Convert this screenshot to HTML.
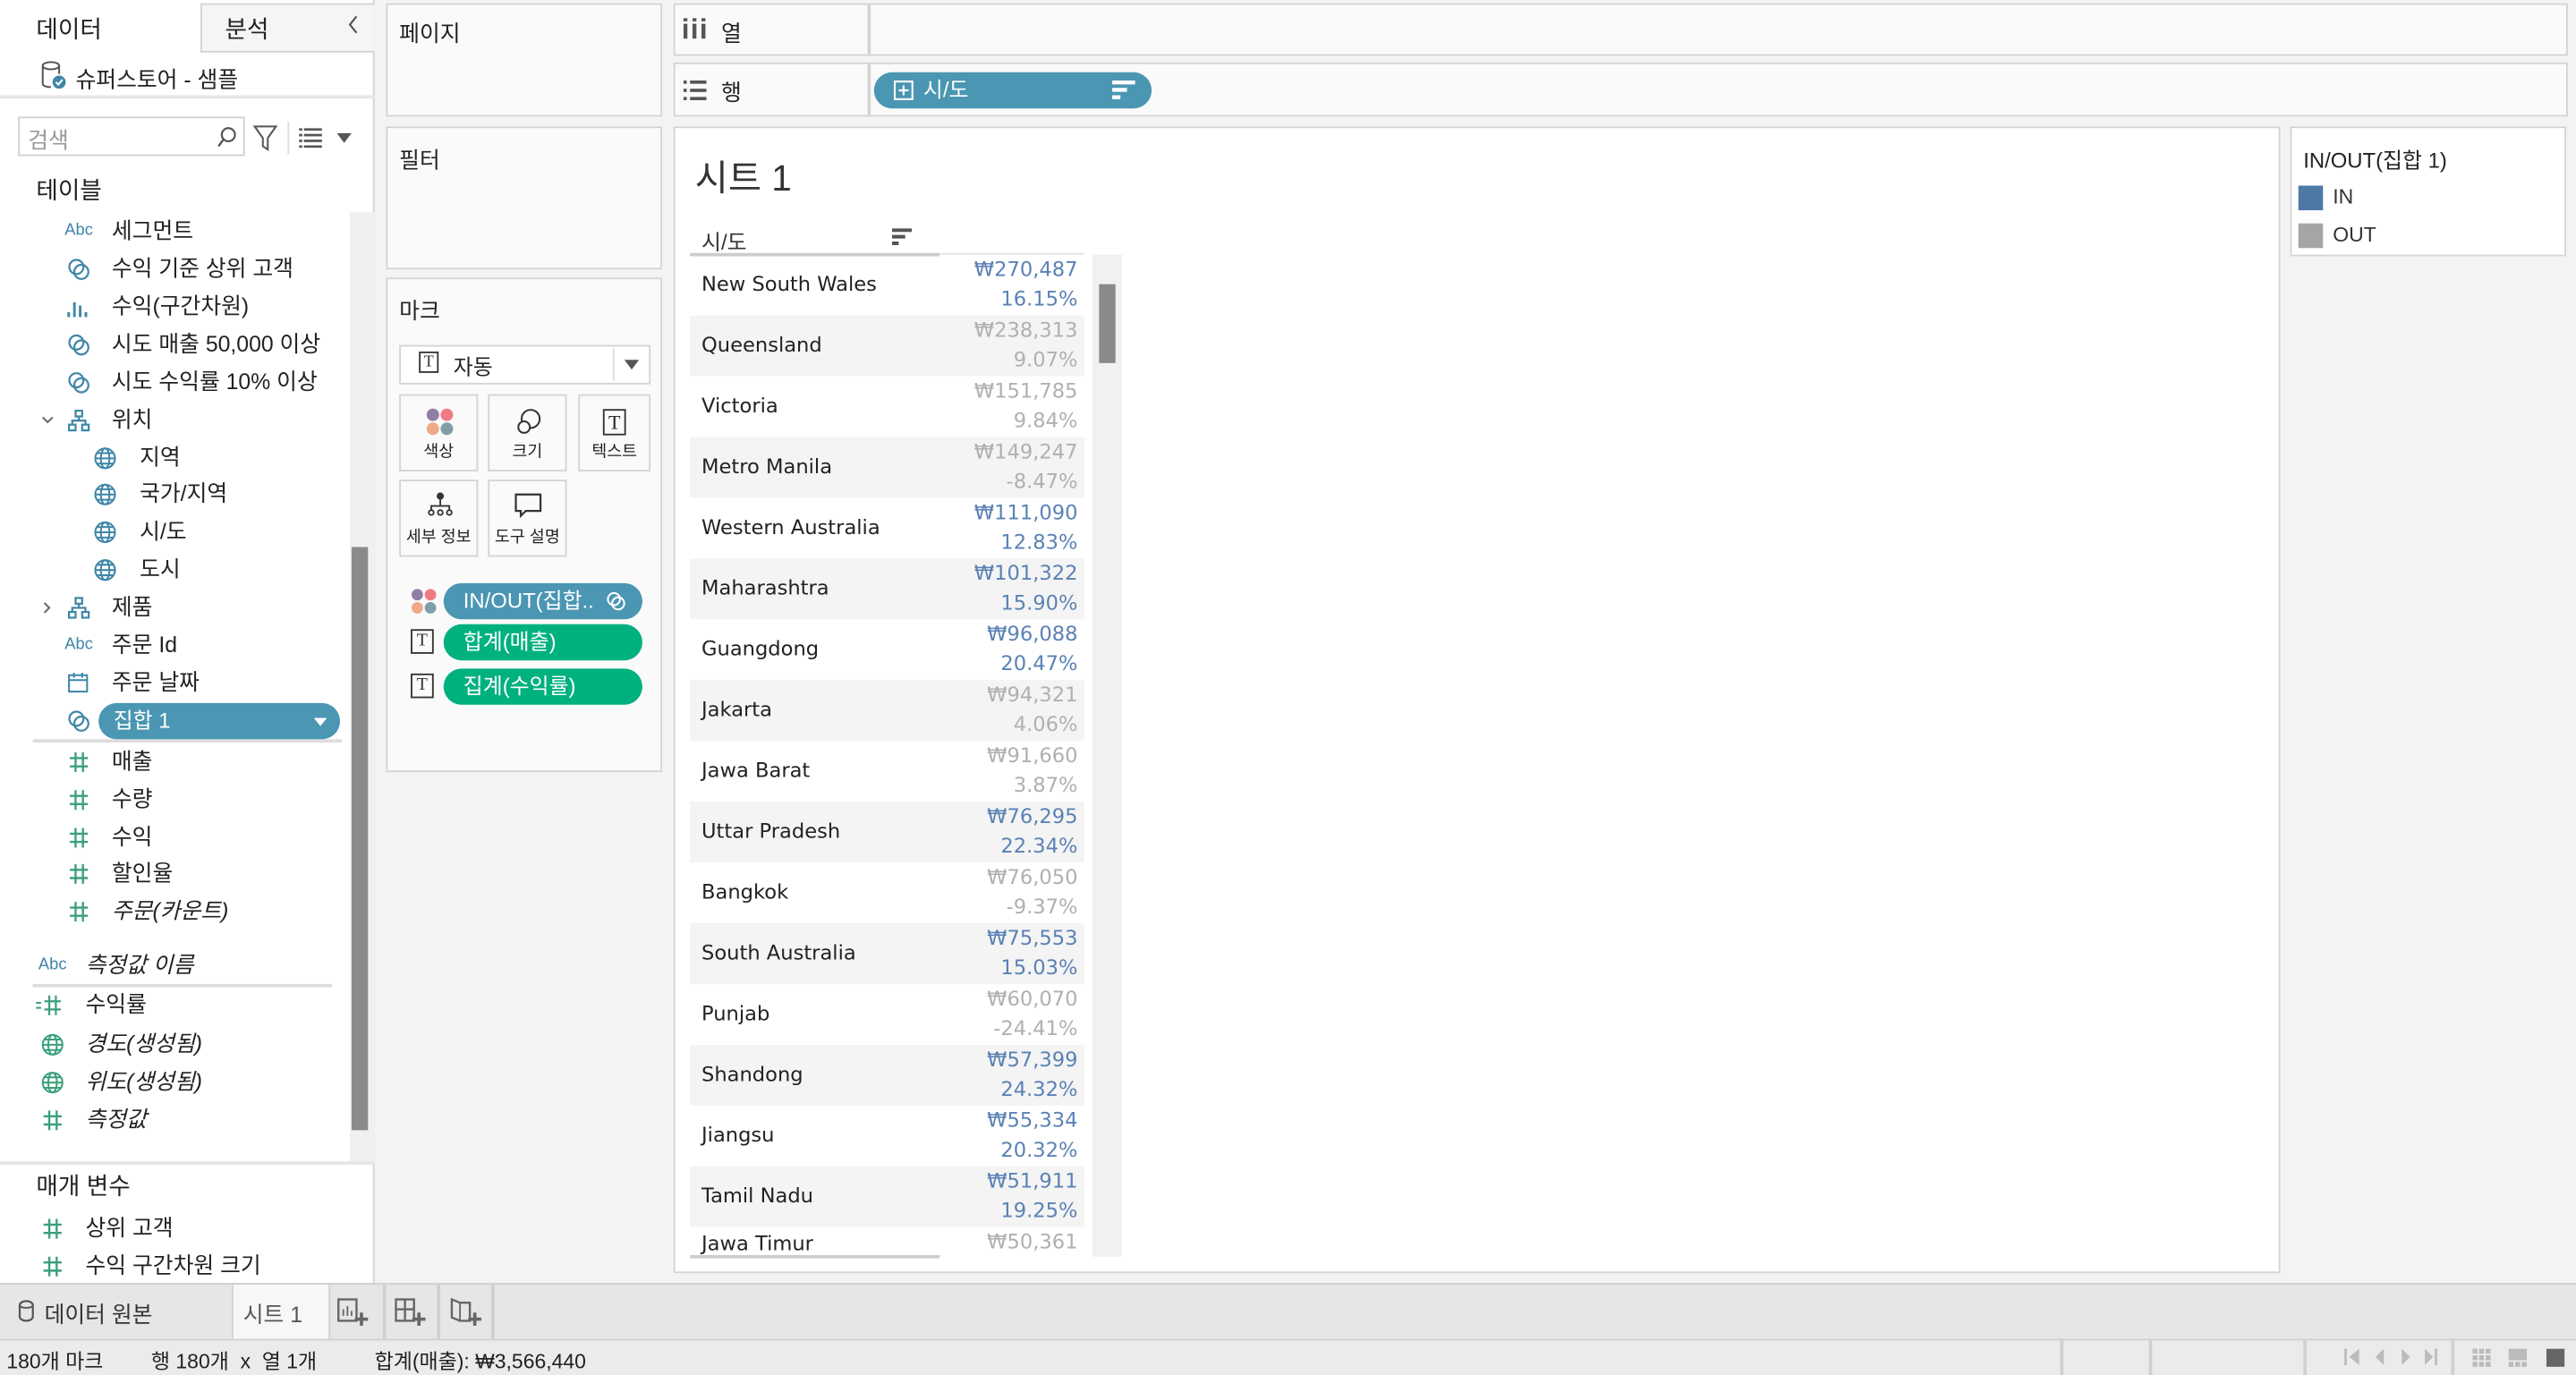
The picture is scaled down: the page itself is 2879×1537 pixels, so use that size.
<!DOCTYPE html>
<html><head><meta charset="utf-8">
<style>
*{box-sizing:border-box;margin:0;padding:0}
html,body{width:2879px;height:1537px;overflow:hidden;background:#f3f3f3}
#w{position:absolute;left:0;top:0;width:1568px;height:837px;transform:scale(1.8361,1.8363);transform-origin:0 0;font-family:"Liberation Sans","Noto Sans CJK KR",sans-serif;color:#333;font-size:13px;background:#f3f3f3}
.a{position:absolute;white-space:nowrap}
.card{position:absolute;background:#fafafa;border:1.5px solid #d4d4d4}
.it{position:absolute;left:0;height:23px;line-height:23px;font-size:13.5px;color:#222}
.it .ic{position:absolute;width:20px;text-align:center;color:#3f86a8;font-size:10px}
.it svg{position:absolute;top:5px}
.g{color:#3aa07a!important}
.row{position:absolute;left:420px;width:240px;height:37px}
.row.s{background:#f4f4f4}
.row .n{position:absolute;left:7px;top:11px;color:#222;font-family:"DejaVu Sans",sans-serif;font-size:12.3px}
.row .v{position:absolute;right:4px;top:1px;text-align:right;font-family:"DejaVu Sans",sans-serif;font-size:12.3px;line-height:17.5px}
.b{color:#5b82b4}.q{color:#b0b0b0}
.mb{position:absolute;width:48px;height:47px;border:1.5px solid #d4d4d4;background:#fafafa;text-align:center;font-size:10px;color:#222}
.mb span{position:absolute;left:0;right:0;bottom:5px}
.pill{position:absolute;height:22px;border-radius:11px;color:#fff;font-size:13px;line-height:22px}
</style></head><body><div id="w">
<svg width="0" height="0" style="position:absolute"><defs>
<symbol id="set" viewBox="0 0 14 14"><circle cx="5.5" cy="5.5" r="4.3" fill="none" stroke="#3f86a8" stroke-width="1.2"/><circle cx="8.5" cy="8.5" r="4.3" fill="none" stroke="#3f86a8" stroke-width="1.2"/></symbol>
<symbol id="gl" viewBox="0 0 14 14"><g fill="none" stroke="#3f86a8" stroke-width="1.1"><circle cx="7" cy="7" r="6"/><ellipse cx="7" cy="7" rx="2.6" ry="6"/><path d="M1 7h12M2 3.8h10M2 10.2h10"/></g></symbol>
<symbol id="glg" viewBox="0 0 14 14"><g fill="none" stroke="#3aa07a" stroke-width="1.1"><circle cx="7" cy="7" r="6"/><ellipse cx="7" cy="7" rx="2.6" ry="6"/><path d="M1 7h12M2 3.8h10M2 10.2h10"/></g></symbol>
<symbol id="hi" viewBox="0 0 14 14"><g fill="none" stroke="#3f86a8" stroke-width="1.2"><rect x="5" y="1" width="4" height="3.5"/><rect x="1" y="9.5" width="4" height="3.5"/><rect x="9" y="9.5" width="4" height="3.5"/><path d="M7 4.5v2.5M3 9.5V7h8v2.5"/></g></symbol>
<symbol id="hs" viewBox="0 0 14 14"><g stroke="#3aa07a" stroke-width="1.3"><path d="M5 1v12M9.5 1v12M1.5 4.5h11M1.5 9.5h11"/></g></symbol>
</defs></svg>

<!-- left pane -->
<div class="a" style="left:0;top:0;width:228px;height:781px;background:#fff;border-right:1.5px solid #d4d4d4"></div>
<div class="a" style="left:122px;top:2px;width:106px;height:30px;background:#f5f5f5;border-left:1.5px solid #d4d4d4;border-bottom:1.5px solid #d4d4d4;border-top:1.5px solid #d4d4d4"></div>
<div class="a" style="left:22px;top:7px;font-size:14.5px;color:#222">데이터</div>
<div class="a" style="left:137px;top:7px;font-size:14.5px;color:#222">분석</div>
<svg class="a" style="left:211px;top:9px" width="8" height="12"><path d="M6 1L2 6l4 5" fill="none" stroke="#555" stroke-width="1.2"/></svg>
<svg class="a" style="left:24px;top:36px" width="18" height="19" viewBox="0 0 18 19"><ellipse cx="7" cy="4" rx="5" ry="2.2" fill="none" stroke="#555" stroke-width="1.1"/><path d="M2 4v11c0 1.2 2 2 5 2M12 4v5" fill="none" stroke="#555" stroke-width="1.1"/><circle cx="12" cy="14" r="4" fill="#3f86a8"/><path d="M10 14l1.5 1.5 2.5-3" stroke="#fff" stroke-width="1.1" fill="none"/></svg>
<div class="a" style="left:46px;top:37px;font-size:13.5px;color:#222">슈퍼스토어 - 샘플</div>
<div class="a" style="left:0;top:58px;width:228px;height:1.5px;background:#e6e6e6"></div>
<div class="a" style="left:11px;top:71px;width:138px;height:24px;border:1.5px solid #d0d0d0;background:#fff"></div>
<div class="a" style="left:17px;top:74px;font-size:13.5px;color:#999">검색</div>
<svg class="a" style="left:131px;top:76px" width="14" height="14"><circle cx="8" cy="6" r="4" fill="none" stroke="#555" stroke-width="1.2"/><path d="M5 9l-3 4" stroke="#555" stroke-width="1.3"/></svg>
<svg class="a" style="left:154px;top:76px" width="16" height="16"><path d="M1 1h13l-5 7v7l-3-2V8z" fill="none" stroke="#555" stroke-width="1.1"/></svg>
<div class="a" style="left:175px;top:74px;width:1px;height:20px;background:#ddd"></div>
<svg class="a" style="left:182px;top:78px" width="14" height="12"><g fill="#555"><rect x="0" y="0" width="2" height="1.5"/><rect x="3" y="0" width="11" height="1.5"/><rect x="0" y="3.5" width="2" height="1.5"/><rect x="3" y="3.5" width="11" height="1.5"/><rect x="0" y="7" width="2" height="1.5"/><rect x="3" y="7" width="11" height="1.5"/><rect x="0" y="10.5" width="2" height="1.5"/><rect x="3" y="10.5" width="11" height="1.5"/></g></svg>
<svg class="a" style="left:205px;top:81px" width="9" height="6"><path d="M0 0h9L4.5 6z" fill="#555"/></svg>
<div class="a" style="left:22px;top:105px;font-size:14.5px;color:#222">테이블</div>
<div class="a" style="left:213px;top:129px;width:15px;height:578px;background:#f0f0f0"></div>
<div class="a" style="left:214px;top:333px;width:10px;height:355px;background:#8a8a8a"></div>

<div class="it" style="top:129px"><span class="ic" style="left:38px">Abc</span><span class="a" style="left:68px">세그먼트</span></div>
<div class="it" style="top:152px"><svg style="left:41px" width="14" height="14"><use href="#set"/></svg><span class="a" style="left:68px">수익 기준 상위 고객</span></div>
<div class="it" style="top:175px"><svg style="left:40px" width="14" height="14"><g fill="#3f86a8"><rect x="1" y="10" width="1.6" height="3"/><rect x="4.5" y="4" width="1.6" height="9"/><rect x="8" y="6" width="1.6" height="7"/><rect x="11.5" y="10" width="1.6" height="3"/></g></svg><span class="a" style="left:68px">수익(구간차원)</span></div>
<div class="it" style="top:198px"><svg style="left:41px" width="14" height="14"><use href="#set"/></svg><span class="a" style="left:68px">시도 매출 50,000 이상</span></div>
<div class="it" style="top:221px"><svg style="left:41px" width="14" height="14"><use href="#set"/></svg><span class="a" style="left:68px">시도 수익률 10% 이상</span></div>
<div class="it" style="top:244px"><svg style="left:25px;top:9px" width="8" height="6"><path d="M1 1l3 3 3-3" fill="none" stroke="#666" stroke-width="1.1"/></svg><svg style="left:41px" width="14" height="14"><use href="#hi"/></svg><span class="a" style="left:68px">위치</span></div>
<div class="it" style="top:267px"><svg style="left:57px" width="14" height="14"><use href="#gl"/></svg><span class="a" style="left:85px">지역</span></div>
<div class="it" style="top:289px"><svg style="left:57px" width="14" height="14"><use href="#gl"/></svg><span class="a" style="left:85px">국가/지역</span></div>
<div class="it" style="top:312px"><svg style="left:57px" width="14" height="14"><use href="#gl"/></svg><span class="a" style="left:85px">시/도</span></div>
<div class="it" style="top:335px"><svg style="left:57px" width="14" height="14"><use href="#gl"/></svg><span class="a" style="left:85px">도시</span></div>
<div class="it" style="top:358px"><svg style="left:26px;top:8px" width="6" height="8"><path d="M1 1l3 3-3 3" fill="none" stroke="#666" stroke-width="1.1"/></svg><svg style="left:41px" width="14" height="14"><use href="#hi"/></svg><span class="a" style="left:68px">제품</span></div>
<div class="it" style="top:381px"><span class="ic" style="left:38px">Abc</span><span class="a" style="left:68px">주문 Id</span></div>
<div class="it" style="top:404px"><svg style="left:41px" width="13" height="13"><g fill="none" stroke="#3f86a8" stroke-width="1.1"><rect x="1" y="2" width="11" height="10"/><path d="M1 5h11M4 0.5v3M9 0.5v3"/></g></svg><span class="a" style="left:68px">주문 날짜</span></div>
<svg class="a" style="left:41px;top:432px" width="14" height="14"><use href="#set"/></svg>
<div class="pill" style="left:60px;top:428px;width:147px;background:#4a96b3;padding-left:9px">집합 1<svg style="position:absolute;right:8px;top:9px" width="8" height="5"><path d="M0 0h8L4 5z" fill="#fff"/></svg></div>
<div class="a" style="left:20px;top:450px;width:188px;height:1.5px;background:#ddd"></div>
<div class="it" style="top:452px"><svg style="left:41px" width="14" height="14"><use href="#hs"/></svg><span class="a" style="left:68px">매출</span></div>
<div class="it" style="top:475px"><svg style="left:41px" width="14" height="14"><use href="#hs"/></svg><span class="a" style="left:68px">수량</span></div>
<div class="it" style="top:498px"><svg style="left:41px" width="14" height="14"><use href="#hs"/></svg><span class="a" style="left:68px">수익</span></div>
<div class="it" style="top:520px"><svg style="left:41px" width="14" height="14"><use href="#hs"/></svg><span class="a" style="left:68px">할인율</span></div>
<div class="it" style="top:543px"><svg style="left:41px" width="14" height="14"><use href="#hs"/></svg><span class="a" style="left:68px;font-style:italic">주문(카운트)</span></div>
<div class="it" style="top:576px"><span class="ic" style="left:22px">Abc</span><span class="a" style="left:52px;font-style:italic">측정값 이름</span></div>
<div class="a" style="left:20px;top:599px;width:182px;height:1.5px;background:#ddd"></div>
<div class="it" style="top:600px"><svg style="left:21px" width="18" height="14"><g stroke="#3aa07a" stroke-width="1.2"><path d="M1 5.5h3M1 8.5h3M9 1v12M13 1v12M6 4.5h10M6 9.5h10"/></g></svg><span class="a" style="left:52px">수익률</span></div>
<div class="it" style="top:624px"><svg style="left:25px" width="14" height="14"><use href="#glg"/></svg><span class="a" style="left:52px;font-style:italic">경도(생성됨)</span></div>
<div class="it" style="top:647px"><svg style="left:25px" width="14" height="14"><use href="#glg"/></svg><span class="a" style="left:52px;font-style:italic">위도(생성됨)</span></div>
<div class="it" style="top:670px"><svg style="left:25px" width="14" height="14"><use href="#hs"/></svg><span class="a" style="left:52px;font-style:italic">측정값</span></div>
<div class="a" style="left:0;top:707px;width:228px;height:2px;background:#e4e4e4"></div>
<div class="a" style="left:22px;top:711px;font-size:14.5px;color:#222">매개 변수</div>
<div class="it" style="top:736px"><svg style="left:25px" width="14" height="14"><use href="#hs"/></svg><span class="a" style="left:52px">상위 고객</span></div>
<div class="it" style="top:759px"><svg style="left:25px" width="14" height="14"><use href="#hs"/></svg><span class="a" style="left:52px">수익 구간차원 크기</span></div>

<!-- cards -->
<div class="card" style="left:235px;top:2px;width:168px;height:69px"></div>
<div class="a" style="left:243px;top:9px;font-size:13.5px;color:#222">페이지</div>
<div class="card" style="left:235px;top:77px;width:168px;height:87px"></div>
<div class="a" style="left:243px;top:86px;font-size:13.5px;color:#222">필터</div>
<div class="card" style="left:235px;top:169px;width:168px;height:301px"></div>
<div class="a" style="left:243px;top:178px;font-size:13.5px;color:#222">마크</div>
<div class="a" style="left:243px;top:210px;width:153px;height:24px;border:1.5px solid #d4d4d4;background:#fff"></div>
<div class="a" style="left:373px;top:212px;width:1px;height:20px;background:#ddd"></div>
<div class="a" style="left:255px;top:214px;width:12px;height:13px;border:1.3px solid #333;font-size:10px;line-height:11px;text-align:center;font-family:'Liberation Serif',serif">T</div>
<div class="a" style="left:276px;top:213px;font-size:13px;color:#222">자동</div>
<svg class="a" style="left:380px;top:219px" width="9" height="6"><path d="M0 0h9L4.5 6z" fill="#555"/></svg>
<div class="mb" style="left:243px;top:240px"><svg style="position:absolute;left:15px;top:7px" width="18" height="18"><circle cx="4.5" cy="4.5" r="3.8" fill="#8f7fa6"/><circle cx="13" cy="4.5" r="3.8" fill="#ef7a85"/><circle cx="4.5" cy="13" r="3.8" fill="#efa987"/><circle cx="13" cy="13" r="3.8" fill="#7f9ea8"/></svg><span>색상</span></div>
<div class="mb" style="left:297px;top:240px"><svg style="position:absolute;left:15px;top:7px" width="18" height="18"><circle cx="10" cy="7" r="5.5" fill="none" stroke="#333" stroke-width="1.1"/><circle cx="6" cy="12" r="3.5" fill="#fafafa" stroke="#333" stroke-width="1.1"/></svg><span>크기</span></div>
<div class="mb" style="left:352px;top:240px;width:44px"><div style="position:absolute;left:14px;top:8px;width:14px;height:16px;border:1.3px solid #333;font-family:'Liberation Serif',serif;font-size:12px;line-height:14px">T</div><span>텍스트</span></div>
<div class="mb" style="left:243px;top:292px"><svg style="position:absolute;left:16px;top:6px" width="16" height="16"><circle cx="8" cy="3" r="2.2" fill="#333"/><path d="M8 5v4M2.5 12V9h11v3" fill="none" stroke="#333" stroke-width="1"/><circle cx="2.5" cy="13" r="1.5" fill="none" stroke="#333"/><circle cx="8" cy="13" r="1.5" fill="none" stroke="#333"/><circle cx="13.5" cy="13" r="1.5" fill="none" stroke="#333"/></svg><span>세부 정보</span></div>
<div class="mb" style="left:297px;top:292px"><svg style="position:absolute;left:15px;top:7px" width="18" height="16"><path d="M1 1h15v10H7l-3 3v-3H1z" fill="none" stroke="#333" stroke-width="1.2"/></svg><span>도구 설명</span></div>
<svg class="a" style="left:250px;top:358px" width="16" height="16"><circle cx="4" cy="4" r="3.5" fill="#8f7fa6"/><circle cx="12" cy="4" r="3.5" fill="#ef7a85"/><circle cx="4" cy="12" r="3.5" fill="#efa987"/><circle cx="12" cy="12" r="3.5" fill="#7f9ea8"/></svg>
<div class="pill" style="left:270px;top:355px;width:121px;background:#4a96b3;padding-left:12px">IN/OUT(집합..<svg style="position:absolute;right:10px;top:5px" width="12" height="12" viewBox="0 0 14 14"><circle cx="5.5" cy="5.5" r="4.3" fill="none" stroke="#fff" stroke-width="1.3"/><circle cx="8.5" cy="8.5" r="4.3" fill="none" stroke="#fff" stroke-width="1.3"/></svg></div>
<div class="a" style="left:250px;top:383px;width:14px;height:15px;border:1.3px solid #333;font-family:'Liberation Serif',serif;font-size:11px;line-height:13px;text-align:center">T</div>
<div class="pill" style="left:270px;top:380px;width:121px;background:#00b180;padding-left:12px">합계(매출)</div>
<div class="a" style="left:250px;top:410px;width:14px;height:15px;border:1.3px solid #333;font-family:'Liberation Serif',serif;font-size:11px;line-height:13px;text-align:center">T</div>
<div class="pill" style="left:270px;top:407px;width:121px;background:#00b180;padding-left:12px">집계(수익률)</div>

<!-- shelves -->
<div class="card" style="left:410px;top:2px;width:1153px;height:32px"></div>
<div class="a" style="left:528px;top:3px;width:1.5px;height:30px;background:#d4d4d4"></div>
<svg class="a" style="left:416px;top:11px" width="14" height="13"><g fill="#555"><rect x="0" y="0" width="2.4" height="2"/><rect x="0" y="3.5" width="2.4" height="9"/><rect x="5.5" y="0" width="2.4" height="2"/><rect x="5.5" y="3.5" width="2.4" height="9"/><rect x="11" y="0" width="2.4" height="2"/><rect x="11" y="3.5" width="2.4" height="9"/></g></svg>
<div class="a" style="left:439px;top:9px;font-size:13.5px;color:#222">열</div>
<div class="card" style="left:410px;top:38px;width:1153px;height:33px"></div>
<div class="a" style="left:528px;top:39px;width:1.5px;height:31px;background:#d4d4d4"></div>
<svg class="a" style="left:416px;top:49px" width="14" height="12"><g fill="#555"><rect x="0" y="0" width="2" height="2"/><rect x="4" y="0" width="10" height="2"/><rect x="0" y="5" width="2" height="2"/><rect x="4" y="5" width="10" height="2"/><rect x="0" y="10" width="2" height="2"/><rect x="4" y="10" width="10" height="2"/></g></svg>
<div class="a" style="left:439px;top:45px;font-size:13.5px;color:#222">행</div>
<div class="pill" style="left:532px;top:44px;width:169px;background:#4a96b3;padding-left:30px">시/도</div>
<svg class="a" style="left:544px;top:49px" width="12" height="12"><rect x="0.6" y="0.6" width="10.8" height="10.8" fill="none" stroke="#fff" stroke-width="1.2"/><path d="M6 3v6M3 6h6" stroke="#fff" stroke-width="1.2"/></svg>
<svg class="a" style="left:677px;top:49px" width="14" height="12"><g fill="#fff"><rect x="0" y="0" width="14" height="2.4"/><rect x="0" y="4.5" width="9" height="2.4"/><rect x="0" y="9" width="5" height="2.4"/></g></svg>

<!-- sheet -->
<div class="a" style="left:410px;top:77px;width:978px;height:698px;background:#fff;border:1.5px solid #d4d4d4"></div>
<div class="a" style="left:423px;top:91px;font-size:22px;color:#333">시트 1</div>
<div class="a" style="left:427px;top:137px;font-size:13px;color:#333">시/도</div>
<svg class="a" style="left:543px;top:139px" width="12" height="11"><g fill="#555"><rect x="0" y="0" width="12" height="2.2"/><rect x="0" y="4" width="8" height="2.2"/><rect x="0" y="8" width="4" height="2.2"/></g></svg>
<div class="a" style="left:420px;top:154px;width:152px;height:1.5px;background:#ccc"></div>
<div class="a" style="left:572px;top:154px;width:88px;height:1px;background:#e2e2e2"></div>
<div class="a" style="left:665px;top:155px;width:18px;height:610px;background:#f1f1f1"></div>
<div class="a" style="left:669px;top:173px;width:10px;height:48px;background:#8a8a8a"></div>

<div class="row" style="top:155px"><span class="n">New South Wales</span><span class="v b">₩270,487<br>16.15%</span></div>
<div class="row s" style="top:192px"><span class="n">Queensland</span><span class="v q">₩238,313<br>9.07%</span></div>
<div class="row" style="top:229px"><span class="n">Victoria</span><span class="v q">₩151,785<br>9.84%</span></div>
<div class="row s" style="top:266px"><span class="n">Metro Manila</span><span class="v q">₩149,247<br>-8.47%</span></div>
<div class="row" style="top:303px"><span class="n">Western Australia</span><span class="v b">₩111,090<br>12.83%</span></div>
<div class="row s" style="top:340px"><span class="n">Maharashtra</span><span class="v b">₩101,322<br>15.90%</span></div>
<div class="row" style="top:377px"><span class="n">Guangdong</span><span class="v b">₩96,088<br>20.47%</span></div>
<div class="row s" style="top:414px"><span class="n">Jakarta</span><span class="v q">₩94,321<br>4.06%</span></div>
<div class="row" style="top:451px"><span class="n">Jawa Barat</span><span class="v q">₩91,660<br>3.87%</span></div>
<div class="row s" style="top:488px"><span class="n">Uttar Pradesh</span><span class="v b">₩76,295<br>22.34%</span></div>
<div class="row" style="top:525px"><span class="n">Bangkok</span><span class="v q">₩76,050<br>-9.37%</span></div>
<div class="row s" style="top:562px"><span class="n">South Australia</span><span class="v b">₩75,553<br>15.03%</span></div>
<div class="row" style="top:599px"><span class="n">Punjab</span><span class="v q">₩60,070<br>-24.41%</span></div>
<div class="row s" style="top:636px"><span class="n">Shandong</span><span class="v b">₩57,399<br>24.32%</span></div>
<div class="row" style="top:673px"><span class="n">Jiangsu</span><span class="v b">₩55,334<br>20.32%</span></div>
<div class="row s" style="top:710px"><span class="n">Tamil Nadu</span><span class="v b">₩51,911<br>19.25%</span></div>
<div class="row" style="top:747px;height:18px;overflow:hidden"><span class="n" style="top:3px">Jawa Timur</span><span class="v q">₩50,361</span></div>
<div class="a" style="left:420px;top:764px;width:152px;height:1.5px;background:#ccc"></div>

<!-- legend -->
<div class="a" style="left:1394px;top:77px;width:168px;height:79px;background:#fff;border:1.5px solid #d4d4d4"></div>
<div class="a" style="left:1402px;top:87px;font-size:13px;color:#222">IN/OUT(집합 1)</div>
<div class="a" style="left:1399px;top:113px;width:15px;height:15px;background:#4e79a7"></div>
<div class="a" style="left:1420px;top:113px;font-size:12.5px;color:#333">IN</div>
<div class="a" style="left:1399px;top:136px;width:15px;height:15px;background:#a5a5a5"></div>
<div class="a" style="left:1420px;top:136px;font-size:12.5px;color:#333">OUT</div>

<!-- bottom tabs -->
<div class="a" style="left:0;top:781px;width:1568px;height:34px;background:#e6e6e6;border-top:1.5px solid #d0d0d0"></div>
<svg class="a" style="left:11px;top:791px" width="10" height="14"><rect x="1" y="1" width="8" height="12" rx="4" ry="2.5" fill="none" stroke="#555" stroke-width="1.2"/><path d="M1 4c2 1.5 6 1.5 8 0" fill="none" stroke="#555"/></svg>
<div class="a" style="left:27px;top:789px;font-size:13.5px;color:#333">데이터 원본</div>
<div class="a" style="left:141px;top:782px;width:60px;height:33px;background:#f7f7f7;border-left:1.5px solid #d0d0d0;border-right:1.5px solid #d0d0d0"></div>
<div class="a" style="left:148px;top:789px;font-size:13.5px;color:#555">시트 1</div>
<div class="a" style="left:233px;top:782px;width:1.5px;height:33px;background:#d0d0d0"></div>
<div class="a" style="left:266px;top:782px;width:1.5px;height:33px;background:#d0d0d0"></div>
<div class="a" style="left:299px;top:782px;width:1.5px;height:33px;background:#d0d0d0"></div>
<svg class="a" style="left:205px;top:790px" width="20" height="18"><rect x="1" y="1" width="11" height="13" fill="none" stroke="#666" stroke-width="1.3"/><path d="M4 11V7M6.5 11V5M9 11V8" stroke="#666"/><path d="M15 9v8M11 13h8" stroke="#666" stroke-width="2"/></svg>
<svg class="a" style="left:240px;top:790px" width="20" height="18"><rect x="1" y="1" width="11" height="13" fill="none" stroke="#666" stroke-width="1.3"/><path d="M1 7h11M6.5 1v13" stroke="#666" stroke-width="1.3"/><path d="M15 9v8M11 13h8" stroke="#666" stroke-width="2"/></svg>
<svg class="a" style="left:274px;top:790px" width="20" height="18"><path d="M1 1l5 2h6v11H6l-5-2z" fill="none" stroke="#666" stroke-width="1.3"/><path d="M6 3v11" stroke="#666"/><path d="M15 9v8M11 13h8" stroke="#666" stroke-width="2"/></svg>

<!-- status bar -->
<div class="a" style="left:0;top:815px;width:1568px;height:22px;background:#ebebeb;border-top:1.5px solid #d0d0d0"></div>
<div class="a" style="left:4px;top:818px;font-size:12.5px;color:#222">180개 마크</div>
<div class="a" style="left:92px;top:818px;font-size:12.5px;color:#222">행 180개 &nbsp;x &nbsp;열 1개</div>
<div class="a" style="left:228px;top:818px;font-size:12.5px;color:#222">합계(매출): ₩3,566,440</div>
<div class="a" style="left:1254px;top:816px;width:1.5px;height:21px;background:#d0d0d0"></div>
<div class="a" style="left:1308px;top:816px;width:1.5px;height:21px;background:#d0d0d0"></div>
<div class="a" style="left:1402px;top:816px;width:1.5px;height:21px;background:#d0d0d0"></div>
<div class="a" style="left:1492px;top:816px;width:1.5px;height:21px;background:#d0d0d0"></div>
<svg class="a" style="left:1420px;top:820px" width="66" height="12"><g fill="#bbb"><rect x="7" y="1" width="1.5" height="10"/><path d="M16 1v10l-6-5z"/><path d="M31 1v10l-5-5z"/><path d="M42 1v10l5-5z"/><path d="M56 1v10l5-5z"/><rect x="62" y="1" width="1.5" height="10"/></g></svg>
<svg class="a" style="left:1505px;top:821px" width="60" height="12"><g fill="#bbb"><rect x="0" y="0" width="3" height="3"/><rect x="4" y="0" width="3" height="3"/><rect x="8" y="0" width="3" height="3"/><rect x="0" y="4" width="3" height="3"/><rect x="4" y="4" width="3" height="3"/><rect x="8" y="4" width="3" height="3"/><rect x="0" y="8" width="3" height="3"/><rect x="4" y="8" width="3" height="3"/><rect x="8" y="8" width="3" height="3"/><rect x="22" y="0" width="11" height="7"/><rect x="22" y="8" width="3" height="3"/><rect x="26" y="8" width="3" height="3"/><rect x="30" y="8" width="3" height="3"/></g><rect x="45" y="0" width="11" height="11" fill="#666"/></svg>
</div></body></html>
